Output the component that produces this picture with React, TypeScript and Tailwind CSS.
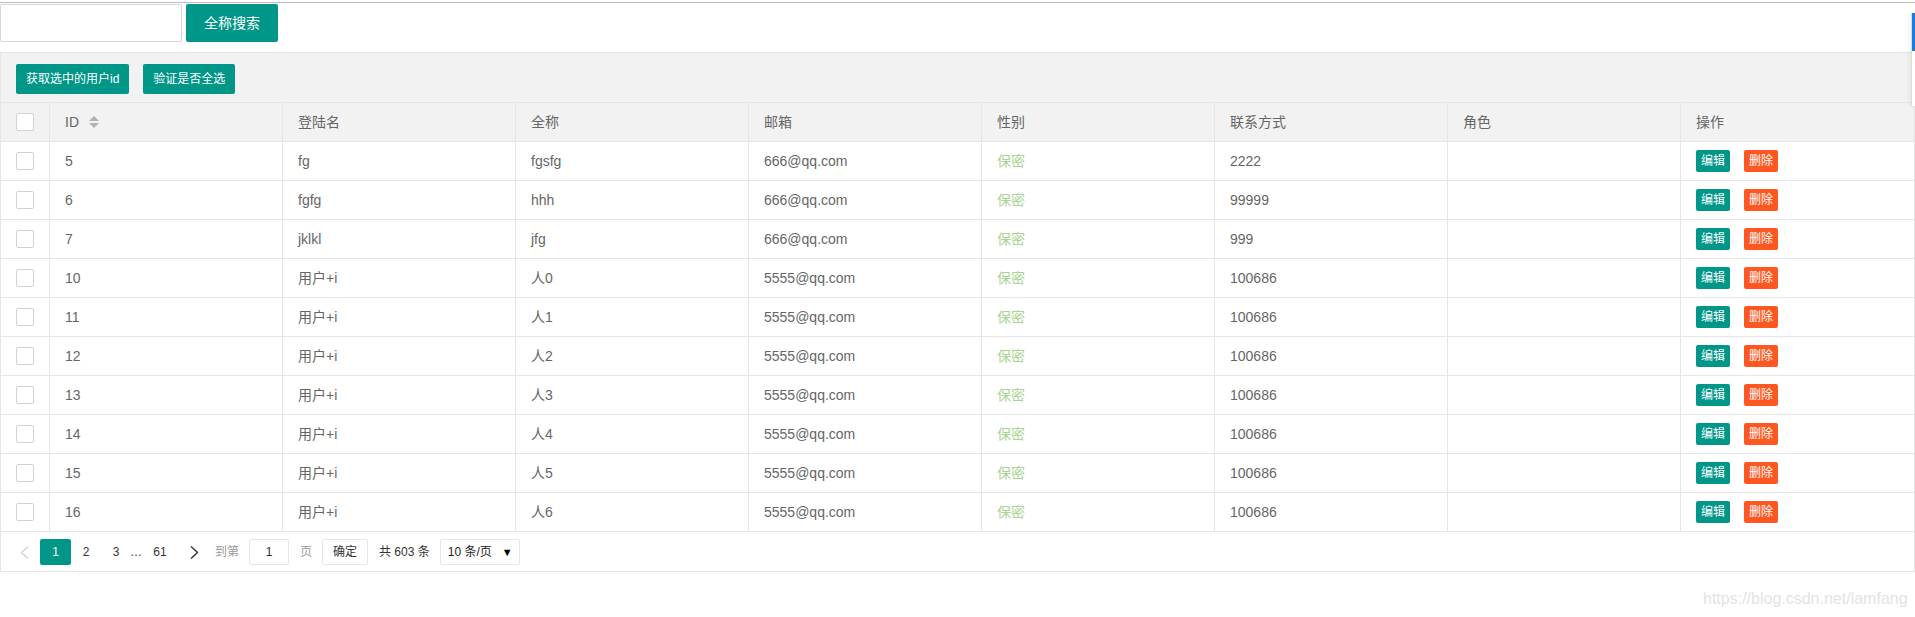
import React from "react";

type Row = {
  id: number;
  login: string;
  name: string;
  email: string;
  phone: string;
};

const rows: Row[] = [
  { id: 5, login: "fg", name: "fgsfg", email: "666@qq.com", phone: "2222" },
  { id: 6, login: "fgfg", name: "hhh", email: "666@qq.com", phone: "99999" },
  { id: 7, login: "jklkl", name: "jfg", email: "666@qq.com", phone: "999" },
  ...[0, 1, 2, 3, 4, 5, 6].map((i) => ({
    id: 10 + i,
    login: "用户+i",
    name: `人${i}`,
    email: "5555@qq.com",
    phone: "100686",
  })),
];

const font = { fontFamily: '"Liberation Sans", Arial, "Noto Sans CJK SC", sans-serif' };

function Checkbox() {
  return <div className="ml-[15px] h-[18px] w-[18px] rounded-[2px] border border-[#d2d2d2] bg-white" />;
}

function SortIcon() {
  return (
    <svg width="10" height="12" viewBox="0 0 10 12" className="ml-[10px]">
      <path d="M0 5 L5 0 L10 5 Z" fill="#b2b2b2" />
      <path d="M0 7 L5 12 L10 7 Z" fill="#b2b2b2" />
    </svg>
  );
}

function Chevron({ dir, color }: { dir: "left" | "right"; color: string }) {
  return (
    <svg width="9" height="13" viewBox="0 0 9 13">
      <path
        d={dir === "left" ? "M8 0.5 L1.5 6.5 L8 12.5" : "M1 0.5 L7.5 6.5 L1 12.5"}
        fill="none"
        stroke={color}
        strokeWidth="1.4"
      />
    </svg>
  );
}

const grid = "grid grid-cols-[49px_repeat(8,minmax(0,1fr))]";
const cell = "flex items-center border-r border-[#e6e6e6] px-[15px] truncate";

export default function App() {
  const headers = ["登陆名", "全称", "邮箱", "性别", "联系方式", "角色"];

  return (
    <div className="relative h-[617px] w-full overflow-hidden bg-white text-[14px] text-[#666]" style={font}>
      <div className="h-[2px]" />
      <div className="h-px bg-[#bdbdbd]" />

      {/* search */}
      <div className="mt-px flex items-center gap-[4px]">
        <input className="h-[38px] w-[182px] rounded-[2px] border border-[#d6d6d6] bg-white px-2 outline-none" />
        <button className="h-[38px] w-[92px] rounded-[2px] bg-[#009688] text-[14px] text-white">全称搜索</button>
      </div>

      {/* table view */}
      <div className="mt-[10px] border border-[#e6e6e6]">
        <div className="flex h-[50px] gap-[14px] border-b border-[#e6e6e6] bg-[#f2f2f2] px-[15px] pt-[11px]">
          <button className="h-[30px] rounded-[2px] bg-[#009688] px-[10px] text-[12px] text-white">获取选中的用户id</button>
          <button className="h-[30px] rounded-[2px] bg-[#009688] px-[10px] text-[12px] text-white">验证是否全选</button>
        </div>

        <div className={`${grid} h-[39px] border-b border-[#e6e6e6] bg-[#f2f2f2]`}>
          <div className="flex items-center border-r border-[#e6e6e6]">
            <Checkbox />
          </div>
          <div className={cell}>
            ID
            <SortIcon />
          </div>
          {headers.map((h) => (
            <div key={h} className={cell}>
              {h}
            </div>
          ))}
          <div className="flex items-center px-[15px]">操作</div>
        </div>

        {rows.map((r) => (
          <div key={r.id} className={`${grid} h-[39px] border-b border-[#e6e6e6]`}>
            <div className="flex items-center border-r border-[#e6e6e6]">
              <Checkbox />
            </div>
            <div className={cell}>{r.id}</div>
            <div className={cell}>{r.login}</div>
            <div className={cell}>{r.name}</div>
            <div className={cell}>{r.email}</div>
            <div className={`${cell} text-[#a9d492]`}>保密</div>
            <div className={cell}>{r.phone}</div>
            <div className={cell}></div>
            <div className="flex items-center gap-[14px] px-[15px]">
              <button className="h-[22px] rounded-[2px] bg-[#009688] px-[5px] text-[12px] text-white">编辑</button>
              <button className="h-[22px] rounded-[2px] bg-[#ff5722] px-[5px] text-[12px] text-white">删除</button>
            </div>
          </div>
        ))}

        {/* pagination */}
        <div className="flex h-[39px] items-start pl-[7px] pt-[7px] text-[12px] text-[#333]">
          <div className="flex h-[26px] w-[32px] items-center justify-center">
            <Chevron dir="left" color="#d2d2d2" />
          </div>
          <div className="flex h-[26px] w-[31px] items-center justify-center rounded-[2px] bg-[#009688] text-white">1</div>
          <div className="flex h-[26px] w-[30px] items-center justify-center">2</div>
          <div className="flex h-[26px] w-[30px] items-center justify-center">3</div>
          <div className="flex h-[26px] w-[10px] items-center justify-center">…</div>
          <div className="flex h-[26px] w-[38px] items-center justify-center">61</div>
          <div className="flex h-[26px] w-[31px] items-center justify-center">
            <Chevron dir="right" color="#333" />
          </div>
          <span className="ml-[5px] leading-[26px] text-[#999]">到第</span>
          <input
            defaultValue="1"
            className="ml-[10px] h-[26px] w-[40px] rounded-[2px] border border-[#e6e6e6] text-center text-[12px] text-[#333] outline-none"
          />
          <span className="ml-[11px] leading-[26px] text-[#999]">页</span>
          <button className="ml-[10px] h-[26px] w-[46px] rounded-[2px] border border-[#e6e6e6] bg-white text-[12px] text-[#333]">
            确定
          </button>
          <span className="ml-[11px] leading-[26px]">共 603 条</span>
          <div className="ml-[10px] flex h-[26px] w-[80px] items-center justify-between rounded-[2px] border border-[#e6e6e6] pl-[7px] pr-[6px] text-[#222]">
            <span>10 条/页</span>
            <span className="text-[11px] text-black">▼</span>
          </div>
        </div>
      </div>

      {/* floating side panel edge */}
      <div className="absolute right-0 top-[13px] h-[93px] w-[4px] border-l border-[#dcdcdc] bg-white shadow-[0_0_6px_rgba(0,0,0,0.12)]">
        <div className="h-[38px] bg-[#1a7bd9]" />
      </div>

      {/* watermark */}
      <div className="absolute left-[1703px] top-[587px] text-[16px] text-[#e3e3e3]">https://blog.csdn.net/lamfang</div>
    </div>
  );
}
